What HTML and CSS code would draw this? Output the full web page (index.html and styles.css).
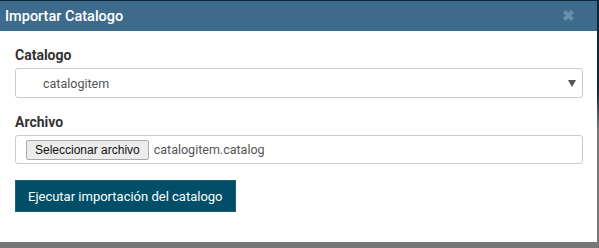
FILE: index.html
```html
<!DOCTYPE html>
<html>
<head>
<meta charset="utf-8">
<link rel="stylesheet" href="styles.css">
</head>
<body>
<div class="modal">
  <div class="modal-header">
    <span class="modal-title">Importar Catalogo</span>
    <span class="close">&#x2716;</span>
  </div>
  <div class="modal-body">
    <div class="group">
      <label class="label">Catalogo</label>
      <div class="select">
        <span class="select-value">catalogitem</span>
        <span class="caret"></span>
      </div>
    </div>
    <div class="group">
      <label class="label">Archivo</label>
      <div class="file">
        <span class="file-btn">Seleccionar archivo</span>
        <span class="file-name">catalogitem.catalog</span>
      </div>
    </div>
    <button class="run">Ejecutar importación del catalogo</button>
  </div>
</div>
</body>
</html>
```
FILE: styles.css
```css
html, body {
  margin: 0;
  padding: 0;
  height: 248px;
  overflow: hidden;
}
body {
  background: linear-gradient(to bottom, #0c2636 0px, #0c2636 90px, #777 130px, #777 100%);
  font-family: Roboto, "Liberation Sans", sans-serif;
}
.modal {
  margin-top: 1px;
  width: 597px;
  height: 241px;
  background: #fff;
  display: flex;
  flex-direction: column;
}
.modal-header {
  height: 30px;
  background: #3e6b8c;
  display: flex;
  align-items: center;
  justify-content: space-between;
  padding: 0 22px 0 5px;
  box-sizing: border-box;
}
.modal-title {
  color: #fff;
  font-size: 14.5px;
  font-weight: 500;
}
.close {
  color: #6a8eaa;
  font-size: 15px;
  font-weight: bold;
  line-height: 1;
  margin-top: 1px;
}
.modal-body {
  padding: 16px 14px 0 15px;
}
.group {
  margin-bottom: 16px;
}
.label {
  display: block;
  font-weight: bold;
  font-size: 14px;
  color: #333;
  margin-bottom: 4px;
  line-height: 17px;
}
.select {
  height: 30px;
  box-sizing: border-box;
  border: 1px solid #ccc;
  border-radius: 3px;
  display: flex;
  align-items: center;
  justify-content: space-between;
  padding: 0 6px 0 27px;
  font-size: 12.5px;
  color: #555;
}
.caret {
  width: 0;
  height: 0;
  border-left: 4px solid transparent;
  border-right: 4px solid transparent;
  border-top: 7px solid #555;
}
.file {
  height: 29px;
  box-sizing: border-box;
  border: 1px solid #ccc;
  border-radius: 3px;
  display: flex;
  align-items: center;
  padding: 0 10px;
  font-size: 12.5px;
  color: #555;
}
.file-btn {
  font-family: "Liberation Sans", Arial, sans-serif;
  font-size: 12px;
  color: #111;
  background: #ececec;
  border: 1px solid #a9a9a9;
  border-radius: 2px;
  padding: 1px 8px;
  height: 20px;
  box-sizing: border-box;
  display: flex;
  align-items: center;
  margin-right: 5px;
}
.run {
  height: 32px;
  padding: 0 12px;
  background: #004e68;
  border: 1px solid #1c5f78;
  color: #fff;
  font-family: Roboto, "Liberation Sans", sans-serif;
  font-size: 13px;
}
```
